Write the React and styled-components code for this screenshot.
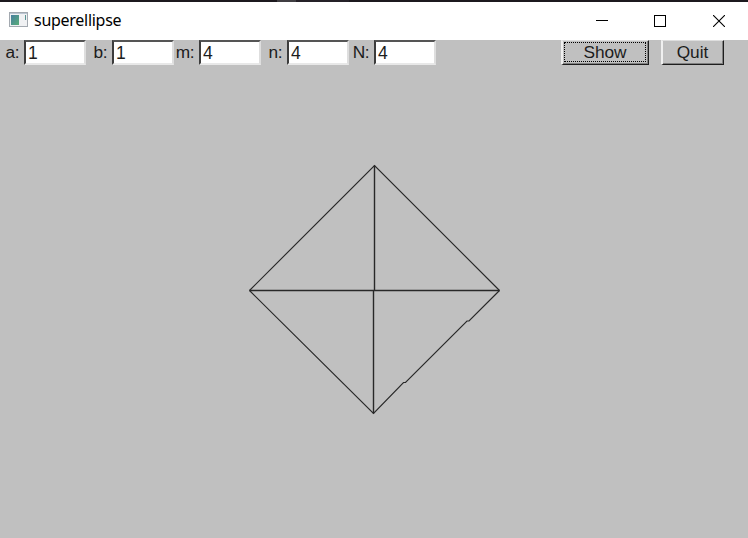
import React from "react";
import styled, { createGlobalStyle } from "styled-components";

const GlobalStyle = createGlobalStyle`
  * { box-sizing: border-box; }
  html, body { margin: 0; padding: 0; overflow: hidden; }
`;

const Window = styled.main`
  width: 748px;
  height: 538px;
  display: flex;
  flex-direction: column;
  background: #c0c0c0;
  font-family: "Liberation Sans", Arial, sans-serif;
  color: #1c1c1c;
`;

const TopEdge = styled.div`
  height: 2px;
  flex: none;
  background: linear-gradient(90deg, #1c191e 277px, #403e42 277px 296px, #252128 296px 349px, #1c191e 349px);
`;

const TitleBar = styled.header`
  height: 38px;
  flex: none;
  display: flex;
  align-items: center;
  padding-left: 9px;
  background: #fff;
`;

const AppIcon = styled.svg`
  width: 20px;
  height: 16px;
  margin-bottom: 2px;
  flex: none;
`;

const Title = styled.h1`
  flex: 1;
  margin: 0 0 2px 5px;
  font: 400 16px/24px "Noto Sans", "Open Sans", sans-serif;
  letter-spacing: -0.28px;
  color: #000;
`;

const WindowControl = styled.button`
  width: 58.5px;
  height: 38px;
  padding: 0;
  border: 0;
  background: transparent;
  display: grid;
  place-items: center;

  svg { display: block; }
`;

const Toolbar = styled.div`
  height: 26px;
  flex: none;
  display: flex;
  align-items: flex-start;
`;

const Fields = styled.div`
  width: 437px;
  display: grid;
  grid-template-columns: 86px 88px 87px 88px 87px;
`;

const Field = styled.label`
  display: flex;
  justify-content: flex-end;
  font-size: 17.3px;
  letter-spacing: -0.5px;
  line-height: 25px;
  white-space: pre;
`;

const Input = styled.input`
  width: 62px;
  height: 25px;
  margin-left: 5px;
  padding: 2px 0 0 2px;
  border: 2px solid;
  border-color: #555 #dedede #e8e8e8 #3c3c3c;
  border-radius: 0;
  outline: 0;
  background: #fff;
  box-shadow: inset 0 1px #fff;
  color: #1c1c1c;
  font: 17.5px "Liberation Sans", Arial, sans-serif;
`;

const Actions = styled.div`
  display: flex;
  gap: 12px;
  margin-left: 124px;
`;

const Button = styled.button`
  width: ${({ $width }) => $width}px;
  height: 25px;
  padding: 1px;
  border: 2px solid;
  border-color: #dedede #1e1e1e #1e1e1e #f0f0f0;
  border-width: 1px 1px 1px 2px;
  border-radius: 0;
  background: #c0c0c0;
  box-shadow: inset -1px -1px #808080;
  font: 17.3px/20px "Liberation Sans", Arial, sans-serif;
  color: #1c1c1c;
`;

const ButtonFace = styled.span`
  display: block;
  height: 20px;
  margin: 0 1px 1px 0;
  border: 1px ${({ $focused }) => ($focused ? "dotted #000" : "solid transparent")};
  line-height: 19px;
`;

const Plot = styled.svg`
  display: block;
  width: 748px;
  height: 472px;
  flex: none;
`;

const fields = [
  ["a", "1"],
  ["b", "1"],
  ["m", "4"],
  ["n", "4"],
  ["N", "4"],
];

export default function App() {
  return (
    <>
      <GlobalStyle />
      <Window>
        <TopEdge />
        <TitleBar>
          <AppIcon viewBox="0 0 20 16">
            <defs>
              <linearGradient id="pane" x1="0" y1="0" x2="1" y2="1">
                <stop offset="0" stopColor="#477f9f" />
                <stop offset="1" stopColor="#58ad78" />
              </linearGradient>
            </defs>
            <rect x=".5" y=".5" width="18" height="14" fill="#f0f1f3" stroke="#a3a9b0" />
            <path d="M1 1.5h17" stroke="#bac5d1" />
            <rect x="2" y="3" width="8" height="10" fill="url(#pane)" />
            <path d="M16.500 3v5" stroke="#5b9594" />
          </AppIcon>
          <Title>superellipse</Title>
          <WindowControl aria-label="Minimize">
            <svg width="12" height="12"><path d="M0 5.5h12" stroke="#000" /></svg>
          </WindowControl>
          <WindowControl aria-label="Maximize">
            <svg width="12" height="12"><rect x=".5" y=".5" width="11" height="11" fill="none" stroke="#000" /></svg>
          </WindowControl>
          <WindowControl aria-label="Close">
            <svg width="12" height="12"><path d="M0 0 12 12M12 0 0 12" stroke="#000" strokeWidth="1.1" /></svg>
          </WindowControl>
        </TitleBar>
        <Toolbar>
          <Fields>
            {fields.map(([name, value]) => (
              <Field key={name}>
                {name}:
                <Input defaultValue={value} />
              </Field>
            ))}
          </Fields>
          <Actions>
            <Button $width={88}><ButtonFace $focused>Show</ButtonFace></Button>
            <Button $width={63}><ButtonFace>Quit</ButtonFace></Button>
          </Actions>
        </Toolbar>
        <Plot viewBox="0 66 748 472" fill="none" stroke="#282828">
          <path d="M249.500 290.500 374.500 165.500 499.500 290.500" strokeWidth="1.15" />
          <path d="M499.500 290.500 469 321h-2L405.500 382.500h-2L373.500 413.500 249.500 290.500" strokeWidth="1.15" />
          <path d="M249.500 290.500H499.500M374.500 165.500V290.500M373.500 290.500V413.500" strokeWidth="1.4" />
        </Plot>
      </Window>
    </>
  );
}
